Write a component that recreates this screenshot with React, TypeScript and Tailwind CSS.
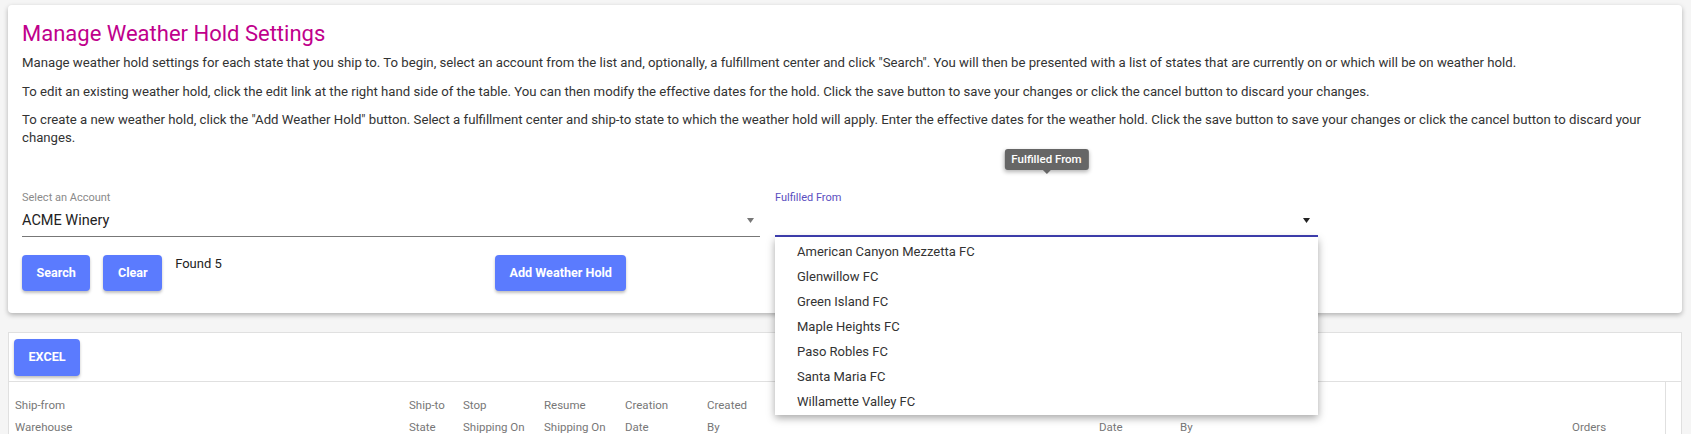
import React from 'react';

const centers = [
    'American Canyon Mezzetta FC',
    'Glenwillow FC',
    'Green Island FC',
    'Maple Heights FC',
    'Paso Robles FC',
    'Santa Maria FC',
    'Willamette Valley FC',
];

const columns: [string, string][] = [
    ['Ship-from', 'Warehouse'],
    ['Ship-to', 'State'],
    ['Stop', 'Shipping On'],
    ['Resume', 'Shipping On'],
    ['Creation', 'Date'],
    ['Created', 'By'],
    ['Modified', 'Date'],
    ['Modified', 'By'],
    ['', 'Orders'],
];

const Caret = ({ color }: { color: string }) => (
    <svg width="7" height="5" viewBox="0 0 7 5" className="shrink-0">
        <path d="M0 0h7L3.5 5z" fill={color} />
    </svg>
);

const PrimaryButton = ({ children, className = '' }: { children: React.ReactNode; className?: string }) => (
    <button
        type="button"
        className={`h-[36px] px-[14.5px] rounded-[4px] bg-[#5b7bfe] text-white text-[12.6px] font-bold shadow-[0_2px_3px_rgba(0,0,0,0.25)] ${className}`}
    >
        {children}
    </button>
);

const App = () => {
    return (
        <div className="h-screen overflow-hidden bg-[#f5f5f5] px-[8px] pt-[5px] font-['Roboto',sans-serif] text-[#333]">
            {/* Settings card */}
            <div className="w-[1674px] bg-white rounded-[4px] shadow-[0_2px_5px_rgba(0,0,0,0.28)] pl-[14px] pr-[20px] pt-[15px] pb-[22px]">
                <h1 className="text-[22px] leading-[28px] text-[#c0008c]">Manage Weather Hold Settings</h1>
                <p className="mt-[6px] text-[13.2px] leading-[18px]">
                    Manage weather hold settings for each state that you ship to. To begin, select an account from the list and, optionally, a fulfillment center and click "Search". You will then be presented with a list of states that are currently on or which will be on weather hold.
                </p>
                <p className="mt-[10.5px] text-[13.2px] leading-[18px]">
                    To edit an existing weather hold, click the edit link at the right hand side of the table. You can then modify the effective dates for the hold. Click the save button to save your changes or click the cancel button to discard your changes.
                </p>
                <p className="mt-[10.5px] text-[13.2px] leading-[18px]">
                    To create a new weather hold, click the "Add Weather Hold" button. Select a fulfillment center and ship-to state to which the weather hold will apply. Enter the effective dates for the weather hold. Click the save button to save your changes or click the cancel button to discard your changes.
                </p>

                <div className="mt-[44px] flex gap-[15px]">
                    <div className="w-[738px]">
                        <label className="block text-[11px] leading-[14px] text-[#8a8a8a]">Select an Account</label>
                        <div className="h-[32px] flex items-center justify-between pr-[6px] border-b border-[#777]">
                            <span className="text-[14.5px] text-[#222]">ACME Winery</span>
                            <Caret color="#777" />
                        </div>
                    </div>
                    <div className="relative w-[543px]">
                        <div className="absolute left-1/2 -translate-x-1/2 top-[-42px] flex flex-col items-center">
                            <div className="h-[21px] px-[7px] flex items-center rounded-[3px] bg-[#666] text-white text-[11.5px] font-medium shadow-[0_2px_4px_rgba(0,0,0,0.3)] whitespace-nowrap">
                                Fulfilled From
                            </div>
                            <svg width="8" height="4" viewBox="0 0 8 4">
                                <path d="M0 0h8L4 4z" fill="#666" />
                            </svg>
                        </div>
                        <label className="block text-[11px] leading-[14px] text-[#5a4ec0]">Fulfilled From</label>
                        <div className="h-[32px] flex items-center justify-end pr-[8px] border-b-2 border-[#3f3fb3]">
                            <Caret color="#222" />
                        </div>
                        <ul className="absolute left-0 top-full w-full bg-white pt-[2px] pb-[1px] shadow-[0_3px_8px_rgba(0,0,0,0.35)] z-10">
                            {centers.map((c) => (
                                <li key={c} className="h-[25px] leading-[25px] pl-[22px] text-[13px] text-[#333]">
                                    {c}
                                </li>
                            ))}
                        </ul>
                    </div>
                </div>

                <div className="mt-[18px] flex items-start">
                    <div className="w-[473px] flex items-start gap-[13px]">
                        <PrimaryButton>Search</PrimaryButton>
                        <PrimaryButton>Clear</PrimaryButton>
                        <span className="text-[13px] leading-[18px] text-[#222]">Found 5</span>
                    </div>
                    <PrimaryButton>Add Weather Hold</PrimaryButton>
                </div>
            </div>

            {/* Results table */}
            <div className="mt-[19px] w-[1674px] bg-white border border-[#e0e0e0]">
                <div className="pl-[5px] pt-[6px] pb-[5px] border-b border-[#e0e0e0]">
                    <PrimaryButton className="h-[37px] w-[66px] px-0">EXCEL</PrimaryButton>
                </div>
                <div className="grid grid-cols-[400px_54px_81px_81px_82px_392px_81px_392px_93px_1fr] text-[11.5px] leading-[22px] text-[#777]">
                    {columns.map(([a, b], i) => (
                        <div key={i} className={`pt-[12px] pb-[20px] ${i === 0 ? 'pl-[6px]' : ''}`}>
                            <div>{a || '\u00a0'}</div>
                            <div>{b}</div>
                        </div>
                    ))}
                    <div className="border-l border-[#e0e0e0]" />
                </div>
            </div>
        </div>
    );
};

export default App;
